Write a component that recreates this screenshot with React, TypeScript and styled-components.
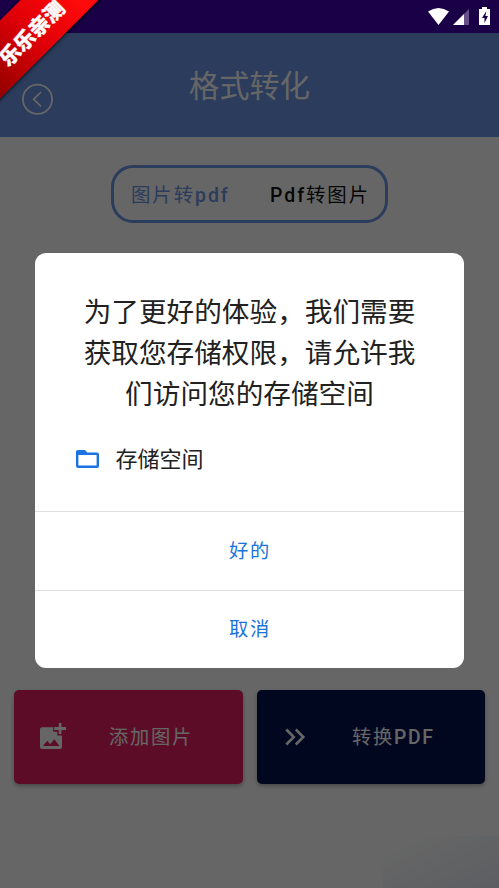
import React from 'react';
import styled, { createGlobalStyle } from 'styled-components';

const GlobalStyle = createGlobalStyle`
  * { box-sizing: border-box; }
  body {
    margin: 0;
    background: #fff;
    overflow: hidden;
    font-family: Roboto, 'Noto Sans CJK SC', sans-serif;
  }
  button { font-family: inherit; border: 0; background: none; padding: 0; margin: 0; }
`;

const Screen = styled.div`
  position: relative;
  display: flex;
  flex-direction: column;
  width: 499px;
  height: 888px;
  overflow: hidden;
  background: #fff;
`;

const StatusBar = styled.div`
  position: relative;
  z-index: 2;
  flex: none;
  display: flex;
  justify-content: flex-end;
  height: 33px;
  background: #1a0046;
`;

const Header = styled.header`
  flex: none;
  display: grid;
  grid-template-columns: 75px 1fr 75px;
  height: 104px;
  background: #6b96e6;
`;

const BackButton = styled.button`
  display: flex;
  padding: 50px 0 0 21px;
`;

const Title = styled.h1`
  margin: 0;
  padding-top: 31px;
  color: #fff;
  font-size: 30.2px;
  line-height: 46px;
  font-weight: 400;
  text-align: center;
`;

const Tabs = styled.div`
  flex: none;
  display: flex;
  align-items: center;
  justify-content: space-between;
  align-self: center;
  width: 277px;
  height: 58px;
  margin-top: 28px;
  padding: 3px 15px 0 17px;
  border: 3px solid #6b96e6;
  border-radius: 22px;
`;

const Label = styled.span`
  font-size: 19.3px;
  line-height: 28px;
  letter-spacing: 1.72px;
  white-space: nowrap;
`;

const TabLabel = styled(Label)`
  font-size: 19.4px;
  letter-spacing: 1.95px;
`;

const Latin = styled.span`
  font-weight: 500;
`;

const Tab = styled.button<{ $active?: boolean }>`
  display: flex;
  color: ${(p) => (p.$active ? '#6b96e6' : '#111')};
`;

const Actions = styled.div`
  flex: none;
  display: flex;
  gap: 14px;
  margin: 466.5px 14px 0;
`;

const ActionButton = styled.button<{ $color: string; $labelX: number }>`
  flex: 1;
  display: grid;
  grid-template-columns: ${(p) => p.$labelX}px 1fr;
  align-items: center;
  text-align: left;
  height: 94.5px;
  border-radius: 5px;
  color: #fff;
  background: ${(p) => p.$color};
  box-shadow: 0 2px 4px rgba(0, 0, 0, 0.3);

  ${Label} { padding-top: 3px; }
`;

const IconSlot = styled.span<{ $inset: number }>`
  display: flex;
  padding-left: ${(p) => p.$inset}px;
`;

const CornerGlow = styled.div`
  position: absolute;
  right: 0;
  bottom: 0;
  width: 116px;
  height: 52px;
  background: linear-gradient(155deg, rgba(225, 235, 240, 0) 15%, rgba(215, 225, 238, 0.6) 95%);
`;

const Scrim = styled.div`
  position: absolute;
  inset: 0;
  z-index: 1;
  padding: 253px 35px 0;
  background: rgba(0, 0, 0, 0.6);
`;

const Dialog = styled.section`
  display: flex;
  flex-direction: column;
  height: 415px;
  border-radius: 11px;
  background: #fff;
  overflow: hidden;
`;

const DialogText = styled.p`
  margin: 38.5px 0 0;
  color: #212121;
  font-size: 27.65px;
  line-height: 41.2px;
  text-align: center;
`;

const Permission = styled.div`
  display: flex;
  align-items: center;
  flex: 1;
  padding: 0 0 6px 39px;
  gap: 13.5px;
  color: #212121;
  font-size: 22px;
  line-height: 32px;
`;

const FolderSlot = styled.span`
  display: flex;
  padding-bottom: 2px;
`;

const DialogButton = styled.button`
  flex: none;
  height: 78.5px;
  padding: 2px 0 0 1px;
  border-top: 1px solid #dedede;
  color: #1a73d9;
`;

const Ribbon = styled.div`
  position: absolute;
  z-index: 3;
  top: 0;
  left: 0;
  width: 110px;
  height: 110px;
  overflow: hidden;
  pointer-events: none;
`;

const RibbonBand = styled.div`
  position: absolute;
  left: -58px;
  top: 4.5px;
  width: 170px;
  height: 55px;
  display: flex;
  align-items: center;
  justify-content: center;
  transform: rotate(-45deg);
  background: linear-gradient(90deg, #980000 15%, #e00008 52%, #ff0a0a 85%);
  box-shadow: 0 1px 4px rgba(0, 0, 0, 0.7);
`;

const RibbonText = styled.span`
  color: #fff;
  font-family: 'Noto Sans CJK SC', sans-serif;
  font-size: 20.5px;
  line-height: 28px;
  font-weight: 900;
  -webkit-text-stroke: 0.4px #fff;
  transform: translate(3px, 2px);
`;

const StatusIcons = () => (
  <svg width="99" height="33" viewBox="0 0 99 33">
    <path d="M28 11.5Q38.5 4.3 49 11.5L38.5 25Z" fill="#fff" />
    <path d="M53 25L69 9V25Z" fill="#665087" />
    <path d="M53 25L64 14V25Z" fill="#fff" />
    <path d="M82 7h5v2h3v16H79V9h3z" fill="#fff" />
    <path d="M86.4 11L82 18h2.5v5L88 16h-2.6z" fill="#1a0046" />
  </svg>
);

const BackIcon = () => (
  <svg width="32" height="32" viewBox="0 0 32 32" fill="none" stroke="#fff">
    <circle cx="16.5" cy="16.2" r="14.6" strokeWidth="1.8" />
    <path d="M20 9.2L12.6 16.2L20 23.3" strokeWidth="1.7" />
  </svg>
);

const FolderIcon = () => (
  <svg width="28" height="24" viewBox="0 0 28 24">
    <path
      fillRule="evenodd"
      fill="#1a73e0"
      d="M4 3h7l2.3 2.5H23q2 0 2 2V19q0 2-2 2H4q-2 0-2-2V5q0-2 2-2zM4.4 8v10.6h18.2V8z"
    />
  </svg>
);

const AddImageIcon = () => (
  <svg width="28" height="28" viewBox="0 0 28 28">
    <path
      fillRule="evenodd"
      fill="#fff"
      d="M3 4.2H14.2V8.7H18.3V12.5H23V24q0 2-2 2H3q-2 0-2-2V6.2q0-2 2-2zM4 23H20.5L15.3 16.2L11.2 21.3L8.2 17.8z"
    />
    <path fill="#fff" d="M19.8 0H22.4v4.1h4.6v2.8H22.4V11h-2.6V6.9h-4.6V4.1h4.6z" />
  </svg>
);

const DoubleChevron = () => (
  <svg width="21" height="18" viewBox="0 0 21 18" fill="none" stroke="#fff" strokeWidth="2.6">
    <path d="M1.3 1.5L8.8 9L1.3 16.5M10.8 1.5L18.3 9L10.8 16.5" />
  </svg>
);

export default function App() {
  return (
    <>
      <GlobalStyle />
      <Screen>
        <StatusBar><StatusIcons /></StatusBar>
        <Header>
          <BackButton aria-label="返回"><BackIcon /></BackButton>
          <Title>格式转化</Title>
        </Header>
        <Tabs>
          <Tab $active><TabLabel>图片转<Latin>pdf</Latin></TabLabel></Tab>
          <Tab><TabLabel><Latin>Pdf</Latin>转图片</TabLabel></Tab>
        </Tabs>
        <Actions>
          <ActionButton $color="#e62060" $labelX={95}>
            <IconSlot $inset={25}><AddImageIcon /></IconSlot>
            <Label>添加图片</Label>
          </ActionButton>
          <ActionButton $color="#051250" $labelX={95.5}>
            <IconSlot $inset={28}><DoubleChevron /></IconSlot>
            <Label>转换<Latin>PDF</Latin></Label>
          </ActionButton>
        </Actions>
        <CornerGlow />
        <Scrim>
          <Dialog role="dialog">
            <DialogText>
              为了更好的体验，我们需要<br />获取您存储权限，请允许我<br />们访问您的存储空间
            </DialogText>
            <Permission><FolderSlot><FolderIcon /></FolderSlot>存储空间</Permission>
            <DialogButton><Label>好的</Label></DialogButton>
            <DialogButton><Label>取消</Label></DialogButton>
          </Dialog>
        </Scrim>
        <Ribbon><RibbonBand><RibbonText>乐乐亲测</RibbonText></RibbonBand></Ribbon>
      </Screen>
    </>
  );
}
